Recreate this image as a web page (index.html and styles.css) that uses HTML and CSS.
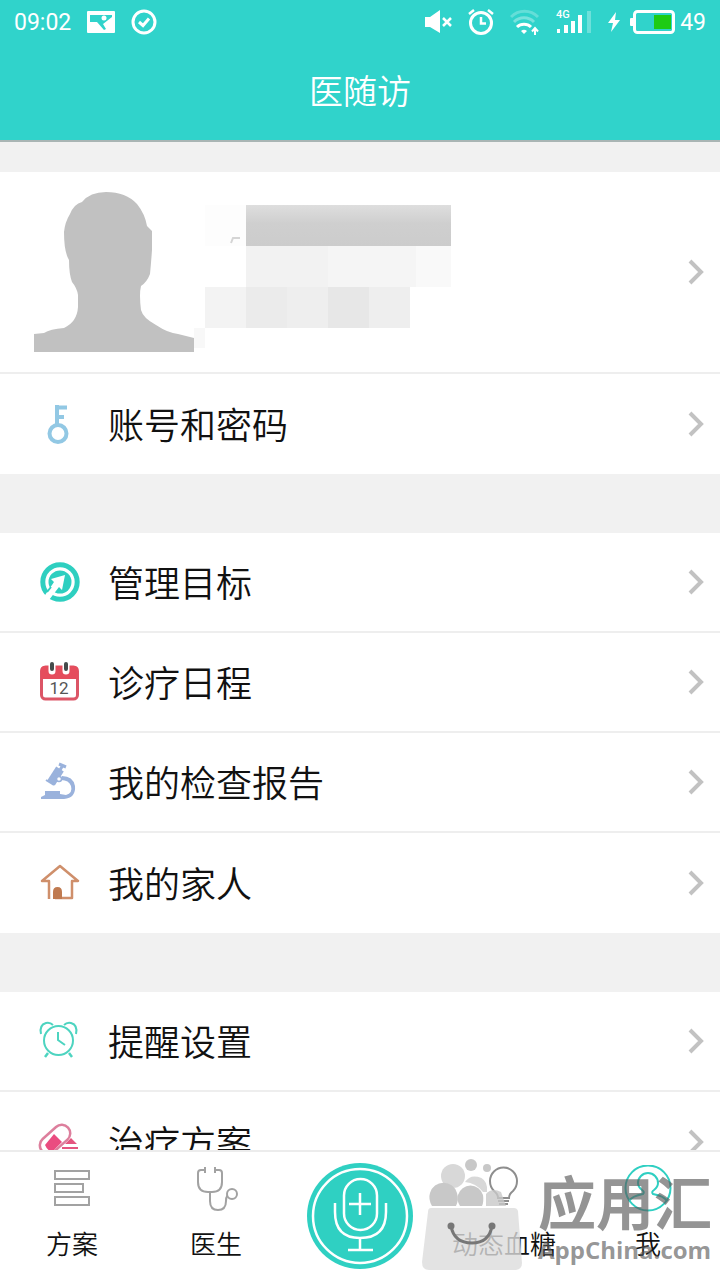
FILE: index.html
```html
<!DOCTYPE html>
<html lang="zh-CN">
<head>
  <meta charset="UTF-8" />
  <meta name="viewport" content="width=device-width, initial-scale=1.0" />
  <title>医随访</title>
  <link rel="stylesheet" href="styles.css">
</head>
<body>
  <svg class="defs" aria-hidden="true">
    <symbol id="chevron" viewBox="0 0 16 26">
      <path d="M2 2 L13 13 L2 24" fill="none" stroke="#c2c2c2" stroke-width="4"/>
    </symbol>
  </svg>

  <div class="app">
    <header class="header">
      <div class="status-bar">
        <div class="status-left">
          <span>09:02</span>
          <svg width="28" height="22" viewBox="0 0 28 22">
            <rect x="0" y="0" width="28" height="22" rx="1" fill="#fff"/>
            <path d="M3 4 H25 V6 L16 13 L19 18 L17 19 L10 11 L3 11 Z" fill="#30d3cb"/>
            <circle cx="17" cy="7" r="2.500" fill="#fff"/>
          </svg>
          <svg width="26" height="26" viewBox="0 0 26 26" fill="none" stroke="#fff" stroke-width="3">
            <circle cx="13" cy="13" r="11"/>
            <path d="M8 13 L12 16.500 L18 9.500"/>
          </svg>
        </div>
        <div class="status-right">
          <svg width="28" height="24" viewBox="0 0 28 24">
            <path d="M1 7 H6 L16 0 V23 L6 17 H1 Z" fill="#fff"/>
            <path d="M19 8 L27 16 M27 8 L19 16" stroke="#fff" stroke-width="2.500"/>
          </svg>
          <svg width="26" height="28" viewBox="0 0 26 28" fill="none" stroke="#fff">
            <circle cx="13" cy="15" r="10.500" stroke-width="3"/>
            <path d="M13 9 V15.500 H18" stroke-width="2.500"/>
            <path d="M1 6 L6 2 M25 6 L20 2" stroke-width="2.500"/>
          </svg>
          <svg width="30" height="26" viewBox="0 0 30 26" fill="none" stroke="#fff">
            <path d="M1 8 A19 19 0 0 1 28 8" stroke-width="3" opacity=".25"/>
            <path d="M4 13 A14 14 0 0 1 24 13" stroke-width="3" opacity=".35"/>
            <path d="M7 18 A10 10 0 0 1 21 18" stroke-width="3"/>
            <path d="M11 22 A4.500 4.500 0 0 1 17 22 L14 25 Z" fill="#fff" stroke="none"/>
            <path d="M25 26 V20 M22 22.500 L25 19 L28 22.500" stroke-width="2"/>
          </svg>
          <svg width="36" height="26" viewBox="0 0 36 26" fill="#fff">
            <text x="0" y="9" class="net-label">4G</text>
            <rect x="1" y="20" width="3" height="4"/>
            <rect x="8" y="16" width="4" height="8"/>
            <rect x="15" y="12" width="4" height="12"/>
            <rect x="22" y="6" width="4" height="18"/>
            <rect x="31" y="2" width="4" height="22" opacity=".3"/>
          </svg>
          <svg class="status-bolt" width="12" height="20" viewBox="0 0 12 20">
            <path d="M8 0 L0 11 H5 L3 20 L12 8 H7 Z" fill="#fff"/>
          </svg>
          <svg width="46" height="24" viewBox="0 0 46 24">
            <rect x="0" y="8" width="4" height="8" rx="1" fill="#fff"/>
            <rect x="4.500" y="1.500" width="39" height="21" rx="3" fill="none" stroke="#fff" stroke-width="3"/>
            <rect x="24" y="5" width="17" height="14" fill="#1ecb14"/>
          </svg>
          <span>49</span>
        </div>
      </div>
      <h1 class="title">医随访</h1>
    </header>

    <main class="content">
      <section class="group">
        <a class="profile" href="#">
          <svg width="160" height="160" viewBox="0 0 160 160">
            <path d="M0 160 V142 L10 141 Q16 137 30 136 Q43 130 44 115 V103 Q43 96 38 90 Q35 82 35 68 Q30 60 30 40 Q31 30 36 22 Q40 12 48 10 Q56 0 72 0 Q92 0 103 12 Q111 22 113 34 L118 39 V58 Q117 72 116 82 Q113 90 107 94 Q105 102 107 118 Q109 126 122 133 Q134 141 144 142 L160 146 V160 Z" fill="#c1c1c1"/>
          </svg>
          <svg class="masked-name" width="270" height="160" viewBox="0 0 270 160">
            <defs>
              <linearGradient id="mask-shade" x1="0" y1="0" x2="0" y2="1">
                <stop offset="0" stop-color="#dedede"/>
                <stop offset=".45" stop-color="#cfcfcf"/>
                <stop offset="1" stop-color="#cccccc"/>
              </linearGradient>
            </defs>
            <rect x="11" y="13" width="41" height="41" fill="#fdfdfd"/>
            <path d="M37 51 L39 46 L46 46" fill="none" stroke="#d5d5d5" stroke-width="2"/>
            <rect x="52" y="13" width="205" height="41" fill="url(#mask-shade)"/>
            <rect x="52" y="54" width="82" height="41" fill="#f2f2f2"/>
            <rect x="134" y="54" width="88" height="41" fill="#f5f5f5"/>
            <rect x="222" y="54" width="35" height="41" fill="#f9f9f9"/>
            <rect x="11" y="95" width="41" height="41" fill="#f3f3f3"/>
            <rect x="52" y="95" width="41" height="41" fill="#ebebeb"/>
            <rect x="93" y="95" width="41" height="41" fill="#eeeeee"/>
            <rect x="134" y="95" width="41" height="41" fill="#e7e7e7"/>
            <rect x="175" y="95" width="41" height="41" fill="#eeeeee"/>
            <rect x="0" y="136" width="11" height="20" fill="#f8f8f8"/>
          </svg>
          <svg class="chevron"><use href="#chevron"/></svg>
        </a>
        <a class="row" href="#">
          <svg class="icon" viewBox="0 0 40 40">
            <path d="M17 1 V21 M16 3.500 H27 M17 13 H24" fill="none" stroke="#92c8e4" stroke-width="4"/>
            <circle cx="18" cy="29.500" r="8.500" fill="none" stroke="#92c8e4" stroke-width="4"/>
          </svg>
          <span class="row-label">账号和密码</span>
          <svg class="chevron"><use href="#chevron"/></svg>
        </a>
      </section>

      <section class="group">
        <a class="row" href="#">
          <svg class="icon" viewBox="0 0 40 40">
            <circle cx="20" cy="20" r="17.200" fill="none" stroke="#2ecfc0" stroke-width="5"/>
            <circle cx="20" cy="20" r="11.500" fill="#2ecfc0"/>
            <path d="M3 36 L12 23 L14 20 L11 17 L25 13 L22 28 L19 25 L9 38 Z" fill="#fff"/>
            <path d="M7 30 L11 25" stroke="#2ecfc0" stroke-width="2"/>
          </svg>
          <span class="row-label">管理目标</span>
          <svg class="chevron"><use href="#chevron"/></svg>
        </a>
        <a class="row" href="#">
          <svg class="icon" viewBox="0 0 40 40">
            <rect x="1.500" y="5" width="36" height="32" rx="4" fill="#fff" stroke="#dc5566" stroke-width="3"/>
            <path d="M1 17 V8 Q1 4 5 4 H34 Q38 4 38 8 V17 Z" fill="#e54d5d"/>
            <path d="M12 0 V9 M26 0 V9" stroke="#fff" stroke-width="7" stroke-linecap="round"/>
            <path d="M12 2 V7 M26 2 V7" stroke="#444b4b" stroke-width="4" stroke-linecap="round"/>
            <text x="19" y="32" text-anchor="middle" class="cal-day">12</text>
          </svg>
          <span class="row-label">诊疗日程</span>
          <svg class="chevron"><use href="#chevron"/></svg>
        </a>
        <a class="row" href="#">
          <svg class="icon" viewBox="0 0 40 40" fill="none" stroke="#9ab2dc">
            <path d="M1 37 V35 L5 33 V29 H20 V32 L26 33 Q33 31 31 24 Q29 18 21 18 L22 14 Q33 14 35 24 Q36 36 24 37 Z" fill="#9ab2dc" stroke="none"/>
            <path d="M20 7 L11 21" stroke-width="9"/>
            <path d="M20 8 L23 3 M19 2 L26 5" stroke-width="3"/>
            <path d="M6 18 L14 23" stroke-width="2"/>
            <circle cx="19" cy="17" r="2.500" fill="#fff" stroke-width="1.500"/>
          </svg>
          <span class="row-label">我的检查报告</span>
          <svg class="chevron"><use href="#chevron"/></svg>
        </a>
        <a class="row" href="#">
          <svg class="icon" viewBox="0 0 40 40" fill="none" stroke="#cf8f6b" stroke-width="2.500">
            <path d="M9 36 V18 H2 L20 3 L38 18 H32 V35 H15" stroke-linejoin="round"/>
            <path d="M13 36 V29 Q13 24 17.500 24 Q22 24 22 29 V36 Z" fill="#c07a50" stroke="none"/>
          </svg>
          <span class="row-label">我的家人</span>
          <svg class="chevron"><use href="#chevron"/></svg>
        </a>
      </section>

      <section class="group">
        <a class="row" href="#">
          <svg class="icon" viewBox="0 0 40 40" fill="none" stroke="#4dd4c0" stroke-width="2">
            <circle cx="18.500" cy="19.500" r="14.500"/>
            <path d="M18 11 V19 L25 24"/>
            <path d="M1 13 Q-1 4 6 2 Q10 1 13 4 M36 13 Q38 4 31 2 Q27 1 24 4"/>
            <path d="M8 32 L5 36 M29 32 L32 36" stroke-width="2.500"/>
          </svg>
          <span class="row-label">提醒设置</span>
          <svg class="chevron"><use href="#chevron"/></svg>
        </a>
        <a class="row" href="#">
          <svg class="icon" viewBox="0 0 40 40">
            <rect x="-2" y="9" width="35" height="17" rx="8.500" transform="rotate(-42 15 18)" fill="#fff" stroke="#dd7f9d" stroke-width="2.500"/>
            <path d="M5 23 L14 12 L22 20 L13 29 Q8 30 5 23 Z" fill="#ea4c80"/>
            <path d="M25 22 L31 16 L37 22 Z M22 25 H38 V27 H22 Z" fill="#e4557f"/>
          </svg>
          <span class="row-label">治疗方案</span>
          <svg class="chevron"><use href="#chevron"/></svg>
        </a>
      </section>
    </main>

    <nav class="tab-bar">
      <a class="tab" href="#">
        <svg width="48" height="48" viewBox="0 0 48 48" fill="none" stroke="#a2a2a2" stroke-width="2">
          <rect x="7" y="6" width="34" height="8"/>
          <rect x="7" y="19" width="28" height="8"/>
          <rect x="7" y="32" width="34" height="8"/>
        </svg>
        <span>方案</span>
      </a>
      <a class="tab" href="#">
        <svg width="48" height="48" viewBox="0 0 48 48" fill="none" stroke="#a2a2a2" stroke-width="2">
          <path d="M13 2 V8 M23 2 V8 M13 5 H9 Q6 5 6 8 V17 Q6 27 16 27 H20 Q30 27 30 17 V8 Q30 5 27 5 H23"/>
          <path d="M18 27 V36 Q18 45 26 45 Q34 45 34 36 Q34 29 39 29"/>
          <circle cx="40" cy="29" r="5" fill="#fff"/>
        </svg>
        <span>医生</span>
      </a>
      <button class="mic" type="button" aria-label="语音">
        <svg width="106" height="106" viewBox="0 0 106 106" fill="none" stroke="#fff" stroke-width="2.500">
          <circle cx="53" cy="53" r="53" fill="#2fd0c2" stroke="none"/>
          <circle cx="53" cy="53" r="47"/>
          <rect x="37" y="16" width="33" height="51" rx="16.500"/>
          <path d="M53 30 V52 M42 41 H64"/>
          <path d="M28 40 V49 Q28 75 53 75 Q79 75 79 49 V40 M53 75 V87 M41 87 H66"/>
        </svg>
      </button>
      <a class="tab" href="#">
        <svg width="48" height="48" viewBox="0 0 48 48" fill="none" stroke="#8e8e8e" stroke-width="2">
          <path d="M18 33 Q18 29 14 26 Q10 22 10 16 A13.500 13.500 0 0 1 37 16 Q37 22 33 26 Q29 29 29 33 Z"/>
          <path d="M18 36 H29 M19 39 H28"/>
        </svg>
        <span>动态血糖</span>
      </a>
      <a class="tab" href="#">
        <svg width="48" height="48" viewBox="0 0 48 48" fill="none" stroke="#2fcfc2" stroke-width="2">
          <circle cx="24" cy="23" r="22.500"/>
          <path d="M5 36 Q8 31 19 29 Q21 27 18 25 Q14 22 14 18 A10 10 0 0 1 34 18 Q34 22 30 25 Q27 27 29 29 Q40 31 43 36"/>
        </svg>
        <span>我</span>
      </a>

      <div class="watermark">
        <svg width="102" height="112" viewBox="0 0 102 112">
          <g fill="#c8c8c8">
            <circle cx="31" cy="17" r="12" opacity=".7"/>
            <circle cx="49" cy="6" r="6"/>
            <circle cx="65" cy="9" r="4"/>
            <path d="M43 23 A12 12 0 0 1 65 28 V33 H61 Q54 24 43 23 Z" opacity=".7"/>
            <path d="M10 47 Q6 40 8 34 A14 14 0 0 1 35 34 Q37 41 34 47 Z"/>
            <path d="M38 47 Q34 40 36 36 A13 13 0 0 1 61 36 Q62 43 60 47 Z"/>
            <path d="M64 47 V35 Q70 28 79 33 L84 47 Z" opacity=".8"/>
          </g>
          <path d="M9 49 H92 Q95 49 96 52 L100 104 Q100 110 94 111 H7 Q0 111 0 103 L6 53 Q6 49 9 49 Z" fill="#dcdcdc" opacity=".8"/>
          <g fill="#777">
            <circle cx="29" cy="67" r="3.500"/>
            <circle cx="70" cy="67" r="3.500"/>
            <path d="M29 67 Q32 84 50 84 Q67 84 70 67" fill="none" stroke="#777" stroke-width="3"/>
          </g>
        </svg>
        <div class="watermark-text">
          <span class="watermark-name">应用汇</span>
          <span class="watermark-site">AppChina.com</span>
        </div>
      </div>
    </nav>
  </div>
</body>
</html>
```

FILE: styles.css
```css
* {
  margin: 0;
  padding: 0;
  box-sizing: border-box;
}
body {
  font-family: Roboto, 'Noto Sans CJK SC', sans-serif;
  background: #f1f1f1;
  color: #111;
}
a {
  color: inherit;
  text-decoration: none;
}
svg {
  display: block;
  flex-shrink: 0;
}
.defs {
  position: absolute;
  width: 0;
  height: 0;
}
.app {
  display: flex;
  flex-direction: column;
  height: 100vh;
}

/* Header */
.header {
  flex-shrink: 0;
  background: #30d3cb;
  border-bottom: 2px solid #a9b5b4;
  color: #fff;
}
.status-bar {
  display: flex;
  align-items: center;
  justify-content: space-between;
  height: 44px;
  padding: 0 14px;
  font-size: 23px;
}
.status-left,
.status-right {
  display: flex;
  align-items: center;
}
.status-left {
  gap: 16px;
}
.status-right {
  gap: 16px;
}
.status-right span {
  margin-left: -12px;
}
.status-bolt {
  margin-right: -6px;
}
.net-label {
  font-size: 11px;
  font-weight: 500;
}
.title {
  font-size: 34px;
  font-weight: 350;
  line-height: 96px;
  text-align: center;
}

/* List */
.content {
  flex: 1;
  min-height: 0;
  padding-top: 30px;
  overflow-y: auto;
  scrollbar-width: none;
}
.group {
  margin-bottom: 59px;
  background: #fff;
}
.profile,
.row {
  display: flex;
  align-items: center;
  padding: 0 16px 0 40px;
  border-bottom: 2px solid #eee;
}
.profile {
  padding: 20px 16px 20px 34px;
}
.row {
  height: 100px;
  gap: 28px;
  font-size: 36px;
  font-weight: 350;
  line-height: 48px;
}
.row:last-child {
  border-bottom: none;
}
.row-label {
  padding-top: 6px;
}
.icon {
  width: 40px;
  height: 40px;
  overflow: visible;
}
.chevron {
  width: 16px;
  height: 26px;
  margin-left: auto;
}
.cal-day {
  font-size: 17px;
  font-weight: 400;
  fill: #555;
}

/* Bottom tabs */
.tab-bar {
  position: relative;
  flex-shrink: 0;
  display: grid;
  grid-template-columns: repeat(5, 1fr);
  height: 130px;
  background: #fff;
  border-top: 2px solid #ececec;
}
.tab {
  display: flex;
  flex-direction: column;
  align-items: center;
  gap: 14px;
  padding-top: 13px;
  font-size: 26px;
  font-weight: 350;
  line-height: 36px;
}
.mic {
  justify-self: center;
  align-self: center;
  border: none;
  border-radius: 50%;
  background: none;
  cursor: pointer;
}

/* Store badge over the tabs */
.watermark {
  position: absolute;
  right: 8px;
  bottom: 9px;
  display: flex;
  gap: 14px;
  pointer-events: none;
}
.watermark-text {
  display: flex;
  flex-direction: column;
  padding-top: 16px;
  color: rgba(90, 90, 90, 0.65);
  font-weight: 700;
}
.watermark-name {
  font-size: 58px;
  line-height: 60px;
}
.watermark-site {
  font-family: 'Open Sans', sans-serif;
  font-size: 24px;
  line-height: 30px;
}
```
